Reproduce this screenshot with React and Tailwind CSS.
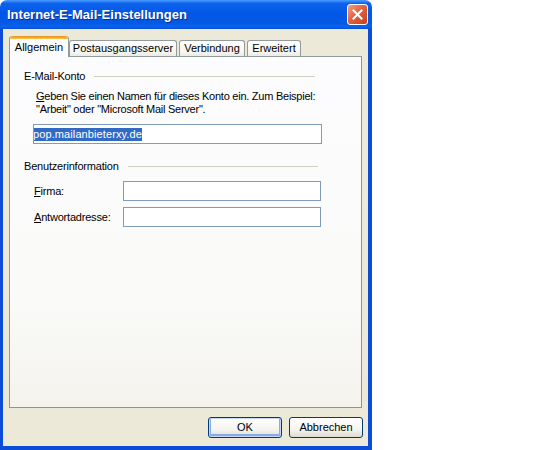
const tabs = [
  { label: 'Allgemein', active: true, w: 'w-[60px]' },
  { label: 'Postausgangsserver', w: 'w-[108px]' },
  { label: 'Verbindung', w: 'w-[66px]' },
  { label: 'Erweitert', w: 'w-[54px]' },
]

function CloseButton() {
  return (
    <div className="flex h-[21px] w-[21px] items-center justify-center rounded-[3px] border border-white bg-[linear-gradient(135deg,#f0a08a_0%,#e2623f_45%,#c9401d_100%)]">
      <svg width="11" height="11" viewBox="0 0 11 11">
        <path d="M1.5 1.5 L9.5 9.5 M9.5 1.5 L1.5 9.5" stroke="white" strokeWidth="2" strokeLinecap="square" />
      </svg>
    </div>
  )
}

function GroupHeader({ title, w }) {
  return (
    <div className={`flex items-center ${w}`}>
      <span className="leading-[13px]">{title}</span>
      <div className="ml-[9px] h-px flex-1 bg-[#d0d0bf]" />
    </div>
  )
}

function Field({ children, className = '' }) {
  return (
    <div className={`h-[20px] border border-[#7f9db9] bg-white ${className}`}>{children}</div>
  )
}

function XpButton({ label, isDefault }) {
  return (
    <div
      className={`flex h-[21px] w-[74px] items-center justify-center rounded-[3px] border border-[#003c74] bg-[linear-gradient(180deg,#ffffff_0%,#f5f4ef_60%,#dedbd0_100%)] ${
        isDefault ? 'shadow-[inset_0_0_0_1px_#c4d7f6,inset_0_-1px_0_2px_#8aa8ea]' : ''
      }`}
    >
      {label}
    </div>
  )
}

export default function App() {
  return (
    <div className="h-[450px] w-[559px] bg-white font-['Liberation_Sans',Arial,sans-serif] text-[11px] text-black">
      <div className="flex h-[450px] w-[372px] flex-col">
        {/* title bar */}
        <div className="flex h-[29px] items-center justify-between rounded-t-[7px] bg-[linear-gradient(180deg,#4a9bff_0%,#0d62ec_12%,#0258e6_45%,#0458e4_80%,#0a63ee_92%,#0a4ed0_100%)] pl-[7px] pr-[4px]">
          <span className="text-[13px] font-bold text-white [text-shadow:1px_1px_0_#0a2d8a]">
            Internet-E-Mail-Einstellungen
          </span>
          <CloseButton />
        </div>

        {/* body */}
        <div className="flex flex-1 flex-col border-b-[4px] border-l-[3px] border-r-[4px] border-[#0c4cd6] bg-[#ece9d8] px-[6px] pt-[7px]">
          <div className="-mb-px flex h-[21px] items-end gap-[2px]">
            {tabs.map((t) =>
              t.active ? (
                <div
                  key={t.label}
                  className={`relative z-10 flex h-[21px] ${t.w} -mr-[2px] flex-col rounded-t-[3px] border-x border-[#919b9c] bg-[#fcfcfe]`}
                >
                  <div className="h-[3px] rounded-t-[3px] bg-[linear-gradient(180deg,#e68b2c_0%,#ffc73c_100%)]" />
                  <div className="flex flex-1 items-start justify-center pt-[2px] leading-[13px]">{t.label}</div>
                </div>
              ) : (
                <div
                  key={t.label}
                  className={`mb-px flex h-[16px] ${t.w} items-center justify-center rounded-t-[3px] border-x border-t border-[#919b9c] bg-[linear-gradient(180deg,#ffffff_0%,#f7f6f1_70%,#ecebe4_100%)] leading-[13px]`}
                >
                  {t.label}
                </div>
              ),
            )}
          </div>

          <div className="h-[352px] border border-[#919b9c] border-b-[#8c9595] border-r-[#8c9595] bg-[linear-gradient(180deg,#fcfcfe_0%,#fafaf8_70%,#f4f3ee_100%)] pl-[14px] pt-[13px] tracking-[-0.2px]">
            <GroupHeader title="E-Mail-Konto" w="w-[291px]" />
            <div className="mt-[7px] pl-[12px] leading-[13px] tracking-[-0.25px]">
              <p>
                <u className="underline-offset-1">G</u>eben Sie einen Namen für dieses Konto ein. Zum Beispiel:
              </p>
              <p>"Arbeit" oder "Microsoft Mail Server".</p>
            </div>
            <Field className="ml-[9px] mt-[8px] flex w-[289px] items-center overflow-hidden pl-[1px]">
              <span className="-ml-[2px] bg-[#316ac5] leading-[13px] tracking-[0.1px] text-white">pop.mailanbieterxy.de</span>
            </Field>

            <div className="mt-[16px]">
              <GroupHeader title="Benutzerinformation" w="w-[294px]" />
            </div>
            <div className="mt-[8px] flex flex-col gap-[6px] pl-[10px]">
              <div className="flex items-center">
                <span className="w-[89px] leading-[13px]">
                  <u className="underline-offset-1">F</u>irma:
                </span>
                <Field className="w-[198px]" />
              </div>
              <div className="flex items-center">
                <span className="w-[89px] leading-[13px]">
                  <u className="underline-offset-1">A</u>ntwortadresse:
                </span>
                <Field className="w-[198px]" />
              </div>
            </div>
          </div>

          <div className="-mr-px mt-[9px] flex justify-end gap-[7px]">
            <XpButton label="OK" isDefault />
            <XpButton label="Abbrechen" />
          </div>
        </div>
      </div>
    </div>
  )
}
